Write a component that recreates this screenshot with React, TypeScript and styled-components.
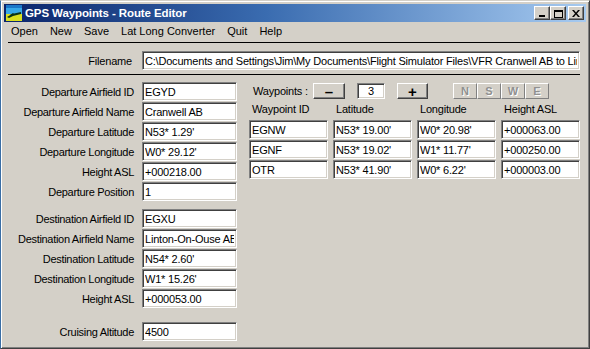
import styled, { createGlobalStyle } from 'styled-components';

const GlobalStyle = createGlobalStyle`
  html, body {
    margin: 0;
    padding: 0;
    background: #d4d0c8;
  }
  body {
    font-family: 'Liberation Sans', Arial, sans-serif;
    font-size: 11px;
    color: #000;
  }
`;

const departure = [
  ['Departure Airfield ID', 'EGYD'],
  ['Departure Airfield Name', 'Cranwell AB'],
  ['Departure Latitude', "N53* 1.29'"],
  ['Departure Longitude', "W0* 29.12'"],
  ['Height ASL', '+000218.00'],
  ['Departure Position', '1'],
];

const destination = [
  ['Destination Airfield ID', 'EGXU'],
  ['Destination Airfield Name', 'Linton-On-Ouse AB'],
  ['Destination Latitude', "N54* 2.60'"],
  ['Destination Longitude', "W1* 15.26'"],
  ['Height ASL', '+000053.00'],
];

const waypoints = [
  ['EGNW', "N53* 19.00'", "W0* 20.98'", '+000063.00'],
  ['EGNF', "N53* 19.02'", "W1* 11.77'", '+000250.00'],
  ['OTR', "N53* 41.90'", "W0* 6.22'", '+000003.00'],
];

const menu = ['Open', 'New', 'Save', 'Lat Long Converter', 'Quit', 'Help'];

function AppIcon() {
  return (
    <svg width="16" height="16" viewBox="0 0 16 16">
      <rect x="0" y="0" width="16" height="9" fill="#38a8e8" />
      <rect x="0" y="0" width="16" height="3" fill="#1c78c8" />
      <rect x="0" y="9" width="16" height="7" fill="#d8e020" />
      <polygon points="1,12 6,9 15,7 15,9 7,11 3,13" fill="#0c3418" />
      <polygon points="4,10 7,8 8,9 5,11" fill="#0c3418" />
    </svg>
  );
}

function CaptionGlyph({ kind }: { kind: 'min' | 'max' | 'close' }) {
  if (kind === 'min') {
    return (
      <svg width="8" height="7" viewBox="0 0 8 7">
        <rect x="1" y="5" width="6" height="2" fill="#000" />
      </svg>
    );
  }
  if (kind === 'max') {
    return (
      <svg width="9" height="9" viewBox="0 0 9 9">
        <rect x="0.5" y="1.5" width="8" height="7" fill="none" stroke="#000" />
        <rect x="0" y="1" width="9" height="2" fill="#000" />
      </svg>
    );
  }
  return (
    <svg width="8" height="7" viewBox="0 0 8 7">
      <path d="M0 0h2l2 2.5L6 0h2L5 3.5 8 7H6L4 4.5 2 7H0l3-3.5z" fill="#000" />
    </svg>
  );
}

function App() {
  return (
    <>
      <GlobalStyle />
      <Window>
        <TitleBar>
          <IconBox>
            <AppIcon />
          </IconBox>
          <TitleText>GPS Waypoints - Route Editor</TitleText>
          <CaptionButtons>
            <CaptionButton>
              <CaptionGlyph kind="min" />
            </CaptionButton>
            <CaptionButton>
              <CaptionGlyph kind="max" />
            </CaptionButton>
            <CaptionButton $gap>
              <CaptionGlyph kind="close" />
            </CaptionButton>
          </CaptionButtons>
        </TitleBar>

        <MenuBar>
          {menu.map((m) => (
            <MenuItem key={m}>{m}</MenuItem>
          ))}
        </MenuBar>

        <Separator />

        <FilenameRow>
          <FilenameLabel>Filename</FilenameLabel>
          <Field
            $width={438}
            readOnly
            value="C:\Documents and Settings\Jim\My Documents\Flight Simulator Files\VFR Cranwell AB to Linton-On-Ouse AB.PLN"
          />
        </FilenameRow>

        <Separator $top={4} />

        <Body>
          <LeftForm>
            <FieldGroup>
              {departure.map(([label, value]) => (
                <FormRow key={label}>
                  <FormLabel>{label}</FormLabel>
                  <Field $width={95} readOnly value={value} />
                </FormRow>
              ))}
            </FieldGroup>
            <FieldGroup $top={8}>
              {destination.map(([label, value]) => (
                <FormRow key={label}>
                  <FormLabel>{label}</FormLabel>
                  <Field $width={95} readOnly value={value} />
                </FormRow>
              ))}
            </FieldGroup>
            <FieldGroup $top={14}>
              <FormRow>
                <FormLabel>Cruising Altitude</FormLabel>
                <Field $width={95} readOnly value="4500" />
              </FormRow>
            </FieldGroup>
          </LeftForm>

          <WaypointPanel>
            <CountRow>
              <CountLabel>Waypoints :</CountLabel>
              <PushButton $width={32}>–</PushButton>
              <CountField readOnly value="3" />
              <PushButton $width={31}>+</PushButton>
              <CompassGroup>
                {['N', 'S', 'W', 'E'].map((d) => (
                  <CompassButton key={d}>{d}</CompassButton>
                ))}
              </CompassGroup>
            </CountRow>
            <WaypointGrid>
              <ColumnHeader>Waypoint ID</ColumnHeader>
              <ColumnHeader>Latitude</ColumnHeader>
              <ColumnHeader>Longitude</ColumnHeader>
              <ColumnHeader>Height ASL</ColumnHeader>
              {waypoints.map((row) =>
                row.map((cell, i) => (
                  <Field key={row[0] + i} $width={79} readOnly value={cell} />
                ))
              )}
            </WaypointGrid>
          </WaypointPanel>
        </Body>
      </Window>
    </>
  );
}

const Window = styled.div`
  width: 590px;
  height: 349px;
  box-sizing: border-box;
  background: #d4d0c8;
  border: 1px solid;
  border-color: #d4d0c8 #404040 #404040 #3a6ea5;
  box-shadow: inset 1px 1px #fff, inset -1px -1px #808080;
  padding: 3px;
  display: flex;
  flex-direction: column;
  overflow: hidden;
`;

const TitleBar = styled.div`
  height: 18px;
  flex: none;
  display: flex;
  align-items: center;
  background: linear-gradient(90deg, #0a246a 0%, #3a6cb0 45%, #a6caf0 100%);
  padding: 0 2px 0 2px;
`;

const IconBox = styled.div`
  width: 16px;
  height: 16px;
  display: flex;
`;

const TitleText = styled.div`
  margin-left: 3px;
  color: #fff;
  font-family: 'Liberation Sans', Arial, sans-serif;
  font-weight: bold;
  font-size: 11.5px;
  letter-spacing: -0.1px;
  flex: 1;
`;

const CaptionButtons = styled.div`
  display: flex;
  align-items: center;
`;

const CaptionButton = styled.div<{ $gap?: boolean }>`
  width: 16px;
  height: 14px;
  box-sizing: border-box;
  margin-left: ${(p) => (p.$gap ? '2px' : '0')};
  background: #d4d0c8;
  border: 1px solid;
  border-color: #fff #404040 #404040 #fff;
  box-shadow: inset -1px -1px #808080;
  display: flex;
  align-items: center;
  justify-content: center;
`;

const MenuBar = styled.div`
  height: 18px;
  flex: none;
  display: flex;
  align-items: center;
  padding-left: 1px;
`;

const MenuItem = styled.div`
  padding: 0 6px;
  line-height: 18px;
  font-size: 11px;
`;

const Separator = styled.div<{ $top?: number }>`
  flex: none;
  height: 1px;
  background: #000;
  margin: ${(p) => p.$top ?? 2}px 6px 0 4px;
`;

const FilenameRow = styled.div`
  display: flex;
  align-items: center;
  margin-top: 8px;
`;

const FilenameLabel = styled.div`
  width: 128px;
  text-align: right;
  margin-right: 10px;
  font-size: 11px;
  letter-spacing: -0.2px;
`;

const Field = styled.input<{ $width: number }>`
  width: ${(p) => p.$width}px;
  height: 19px;
  box-sizing: border-box;
  margin: 0;
  padding: 1px 2px 0;
  font-family: 'Liberation Sans', Arial, sans-serif;
  font-size: 11px;
  letter-spacing: -0.2px;
  color: #000;
  background: #fff;
  border: 1px solid;
  border-color: #808080 #fff #fff #808080;
  box-shadow: inset 1px 1px #404040, inset -1px -1px #d4d0c8;
  outline: none;
  overflow: hidden;
  white-space: nowrap;
`;

const Body = styled.div`
  display: flex;
  padding-top: 7px;
`;

const LeftForm = styled.div`
  display: flex;
  flex-direction: column;
`;

const FieldGroup = styled.div<{ $top?: number }>`
  display: flex;
  flex-direction: column;
  gap: 1px;
  margin-top: ${(p) => p.$top ?? 0}px;
`;

const FormRow = styled.div`
  display: flex;
  align-items: center;
  gap: 8px;
`;

const FormLabel = styled.div`
  width: 130px;
  text-align: right;
  font-size: 11px;
  letter-spacing: -0.3px;
  white-space: nowrap;
`;

const WaypointPanel = styled.div`
  margin-left: 12px;
  display: flex;
  flex-direction: column;
`;

const CountRow = styled.div`
  display: flex;
  align-items: center;
  height: 16px;
  margin-top: 1px;
`;

const CountLabel = styled.div`
  width: 64px;
  padding-left: 4px;
  box-sizing: border-box;
  font-size: 11px;
  letter-spacing: -0.2px;
  white-space: nowrap;
`;

const PushButton = styled.div<{ $width: number }>`
  width: ${(p) => p.$width}px;
  height: 16px;
  box-sizing: border-box;
  background: #d4d0c8;
  border: 1px solid;
  border-color: #fff #404040 #404040 #fff;
  box-shadow: inset -1px -1px #808080;
  display: flex;
  align-items: center;
  justify-content: center;
  font-weight: bold;
  font-size: 15px;
  line-height: 1;
`;

const CountField = styled(Field).attrs({ $width: 28 })`
  height: 16px;
  margin: 0 12px;
  text-align: center;
  padding: 0;
`;

const CompassGroup = styled.div`
  display: flex;
  margin-left: 25px;
`;

const CompassButton = styled.div`
  width: 24px;
  height: 16px;
  box-sizing: border-box;
  background: #d4d0c8;
  border: 1px solid;
  border-color: #fff #808080 #808080 #fff;
  display: flex;
  align-items: center;
  justify-content: center;
  font-weight: bold;
  font-size: 11px;
  color: #909090;
  text-shadow: 1px 1px #fff;
`;

const WaypointGrid = styled.div`
  display: grid;
  grid-template-columns: repeat(4, 79px);
  column-gap: 5px;
  row-gap: 1px;
  grid-auto-rows: 19px;
  margin-top: 1px;
`;

const ColumnHeader = styled.div`
  font-size: 11px;
  letter-spacing: -0.2px;
  padding-left: 3px;
  line-height: 19px;
  height: 19px;
  margin-bottom: 1px;
`;

export default App;
